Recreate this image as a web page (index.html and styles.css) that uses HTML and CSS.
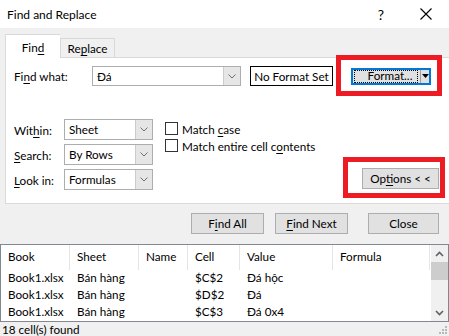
FILE: index.html
```html
<!DOCTYPE html>
<html lang="en">
<head>
    <meta charset="UTF-8">
    <link rel="stylesheet" href="styles.css">
    <title>Find and Replace</title>
</head>
<body>
    <div id="dialog">
        <div class="titlebar">
            <span class="title">Find and Replace</span>
            <span class="help">?</span>
            <svg class="close-x" width="12" height="12" viewBox="0 0 12 12">
                <path d="M0.5 0.5 L11.5 11.5 M11.5 0.5 L0.5 11.5" stroke="#000" stroke-width="1.1" fill="none"/>
            </svg>
        </div>

        <div class="tabs">
            <div class="tab active">Fin<u>d</u></div>
            <div class="tab">Re<u>p</u>lace</div>
        </div>

        <div class="panel">
            <div class="find-row">
                <label class="find-label">Fi<u>n</u>d what:</label>
                <div class="combo find-combo">
                    <span class="combo-text">Đá</span>
                    <span class="drop"><svg width="8" height="5" viewBox="0 0 8 5"><path d="M0.5 0.5 L4 4 L7.5 0.5" stroke="#707070" fill="none"/></svg></span>
                </div>
                <div class="no-format">No Format Set</div>
                <div class="sep-line"></div>
                <div class="format-btn">
                    <span class="format-main"><span class="focus-rect">Format...</span></span>
                    <span class="format-arrow"><svg width="7" height="4" viewBox="0 0 7 4"><path d="M0 0 L7 0 L3.5 4 Z" fill="#000"/></svg></span>
                </div>
            </div>

            <div class="options-row">
                <div class="opt-grid">
                    <label>Wit<u>h</u>in:</label>
                    <div class="combo">
                        <span class="combo-text">Sheet</span>
                        <span class="drop"><svg width="8" height="5" viewBox="0 0 8 5"><path d="M0.5 0.5 L4 4 L7.5 0.5" stroke="#707070" fill="none"/></svg></span>
                    </div>
                    <label><u>S</u>earch:</label>
                    <div class="combo">
                        <span class="combo-text">By Rows</span>
                        <span class="drop"><svg width="8" height="5" viewBox="0 0 8 5"><path d="M0.5 0.5 L4 4 L7.5 0.5" stroke="#707070" fill="none"/></svg></span>
                    </div>
                    <label><u>L</u>ook in:</label>
                    <div class="combo">
                        <span class="combo-text">Formulas</span>
                        <span class="drop"><svg width="8" height="5" viewBox="0 0 8 5"><path d="M0.5 0.5 L4 4 L7.5 0.5" stroke="#707070" fill="none"/></svg></span>
                    </div>
                </div>

                <div class="checks">
                    <div class="check"><span class="box"></span><span>Match <u>c</u>ase</span></div>
                    <div class="check"><span class="box"></span><span>Match entire cell c<u>o</u>ntents</span></div>
                </div>

                <div class="options-wrap">
                    <div class="btn options-btn">Op<u>t</u>ions &lt; &lt;</div>
                </div>
            </div>
        </div>

        <div class="actions">
            <div class="btn find-all">F<u>i</u>nd All</div>
            <div class="btn find-next"><u>F</u>ind Next</div>
            <div class="btn close-btn">Close</div>
        </div>

        <div class="results">
            <div class="table">
                <div class="head">
                    <span class="c-book">Book</span>
                    <span class="c-sheet">Sheet</span>
                    <span class="c-name">Name</span>
                    <span class="c-cell">Cell</span>
                    <span class="c-value">Value</span>
                    <span class="c-formula">Formula</span>
                </div>
                <div class="row">
                    <span class="c-book">Book1.xlsx</span>
                    <span class="c-sheet">Bán hàng</span>
                    <span class="c-name"></span>
                    <span class="c-cell">$C$2</span>
                    <span class="c-value">Đá hộc</span>
                    <span class="c-formula"></span>
                </div>
                <div class="row">
                    <span class="c-book">Book1.xlsx</span>
                    <span class="c-sheet">Bán hàng</span>
                    <span class="c-name"></span>
                    <span class="c-cell">$D$2</span>
                    <span class="c-value">Đá</span>
                    <span class="c-formula"></span>
                </div>
                <div class="row">
                    <span class="c-book">Book1.xlsx</span>
                    <span class="c-sheet">Bán hàng</span>
                    <span class="c-name"></span>
                    <span class="c-cell">$C$3</span>
                    <span class="c-value">Đá 0x4</span>
                    <span class="c-formula"></span>
                </div>
            </div>
            <div class="scrollbar">
                <svg class="arrow" width="9" height="6" viewBox="0 0 9 6"><path d="M1 5 L4.5 1.5 L8 5" stroke="#606060" stroke-width="1.6" fill="none"/></svg>
                <div class="thumb"></div>
                <div class="track"></div>
                <svg class="arrow" width="9" height="6" viewBox="0 0 9 6"><path d="M1 1 L4.5 4.5 L8 1" stroke="#606060" stroke-width="1.6" fill="none"/></svg>
            </div>
        </div>

        <div class="status">
            <span>18 cell(s) found</span>
            <svg class="grip" width="8" height="8" viewBox="0 0 8 8">
                <rect x="6" y="0" width="2" height="2" fill="#b8b8b8"/>
                <rect x="3" y="3" width="2" height="2" fill="#b8b8b8"/>
                <rect x="6" y="3" width="2" height="2" fill="#b8b8b8"/>
                <rect x="0" y="6" width="2" height="2" fill="#b8b8b8"/>
                <rect x="3" y="6" width="2" height="2" fill="#b8b8b8"/>
                <rect x="6" y="6" width="2" height="2" fill="#b8b8b8"/>
            </svg>
        </div>

        <!-- red highlight marks drawn over the dialog -->
        <div class="mark mark-format"></div>
        <div class="mark mark-options"></div>
    </div>
</body>
</html>
```

FILE: styles.css
```css
/* Whole window */
body {
    margin: 0;
    font-family: Lato, "Noto Sans", sans-serif;
    font-size: 11.7px;
    color: #000;
}

#dialog {
    position: relative;
    width: 449px;
    height: 336px;
    background: #f0f0f0;
    overflow: hidden;
    display: flex;
    flex-direction: column;
}

u {
    text-decoration-thickness: 1px;
    text-underline-offset: 2px;
}

/* Title bar */
.titlebar {
    height: 28px;
    background: #fff;
    display: flex;
    align-items: center;
    padding-left: 7px;
    flex-shrink: 0;
}

.title {
    flex: 1;
    font-size: 12px;
}

.help {
    font-size: 14px;
    margin-right: 36px;
}

.close-x {
    margin-right: 17px;
}

/* Tabs */
.tabs {
    display: flex;
    align-items: flex-end;
    margin-top: 7px;
    margin-left: 5px;
    height: 22px;
    position: relative;
    z-index: 1;
}

.tab {
    height: 18px;
    width: 53px;
    border: 1px solid #d9d9d9;
    border-bottom: none;
    text-align: center;
    line-height: 19px;
    background: #f0f0f0;
}

.tab.active {
    height: 23px;
    width: 54px;
    background: #fff;
    border-right: none;
    line-height: 25px;
    margin-bottom: -1px;
}

/* Tab page */
.panel {
    margin-left: 5px;
    width: 437px;
    height: 141px;
    background: #fff;
    border: 1px solid #d9d9d9;
    padding: 8px 0 0 8px;
    box-sizing: content-box;
}

.find-row {
    display: flex;
    align-items: center;
    height: 20px;
}

.find-label {
    width: 78px;
}

.combo {
    display: flex;
    align-items: stretch;
    border: 1px solid #adadad;
    background: #fff;
    box-sizing: border-box;
}

.combo-text {
    flex: 1;
    padding-left: 4px;
    line-height: 18px;
}

.drop {
    width: 16px;
    background: #e6e6e6;
    border-left: 1px solid #cccccc;
    display: flex;
    align-items: center;
    justify-content: center;
}

.find-combo {
    width: 149px;
    height: 20px;
}

.no-format {
    margin-left: 9px;
    width: 83px;
    height: 20px;
    border: 1px solid #000;
    box-sizing: border-box;
    text-align: center;
    line-height: 18px;
    white-space: nowrap;
}

.sep-line {
    margin-left: 6px;
    width: 1px;
    height: 19px;
    background: #000;
}

.format-btn {
    margin-left: 11px;
    width: 80px;
    height: 17px;
    border: 2px solid #0078d7;
    box-sizing: border-box;
    background: #e1e1e1;
    display: flex;
}

.format-main {
    flex: 1;
    display: flex;
    padding: 0 2px 0 1px;
}

.focus-rect {
    flex: 1;
    border: 1px dotted #000;
    display: flex;
    align-items: center;
    justify-content: center;
    padding-left: 8px;
    line-height: 1;
    white-space: nowrap;
}

.format-arrow {
    width: 8px;
    border-left: 1px solid #a0a0a0;
    display: flex;
    align-items: center;
    justify-content: center;
}

/* Options */
.options-row {
    display: flex;
    margin-top: 33px;
}

.opt-grid {
    display: grid;
    grid-template-columns: 50px 89px;
    grid-auto-rows: 21px;
    row-gap: 4px;
    align-items: center;
}

.opt-grid .combo {
    height: 21px;
}

.checks {
    margin-left: 12px;
    margin-top: 3px;
    display: flex;
    flex-direction: column;
    gap: 4px;
}

.check {
    display: flex;
    align-items: center;
    height: 13px;
    white-space: pre;
}

.box {
    width: 13px;
    height: 13px;
    border: 1px solid #333;
    box-sizing: border-box;
    margin-right: 4px;
    background: #fff;
}

.options-wrap {
    flex: 1;
    display: flex;
    justify-content: flex-end;
    align-items: flex-end;
    padding-right: 12px;
    padding-bottom: 1px;
}

/* Buttons */
.btn {
    height: 21px;
    border: 1px solid #adadad;
    box-sizing: border-box;
    background: #e1e1e1;
    text-align: center;
    line-height: 19px;
}

.options-btn {
    width: 77px;
}

.actions {
    display: flex;
    justify-content: flex-end;
    margin-top: 9px;
    padding-right: 10px;
}

.find-all {
    width: 73px;
}

.find-next {
    width: 73px;
    margin-left: 11px;
}

.close-btn {
    width: 71px;
    margin-left: 20px;
}

/* Results list */
.results {
    margin-top: 10px;
    width: 447px;
    height: 77px;
    border: 1px solid #828790;
    background: #fff;
    display: flex;
}

.table {
    flex: 1;
}

.head, .row {
    display: flex;
}

.head {
    height: 25px;
    align-items: center;
}

.head span {
    border-right: 1px solid #e5e5e5;
    height: 25px;
    line-height: 22px;
}

.row {
    height: 17px;
    line-height: 15px;
}

.head span, .row span {
    box-sizing: border-box;
    padding-left: 7px;
    white-space: nowrap;
}

.c-book { width: 69px; }
.c-sheet { width: 69px; }
.c-name { width: 49px; }
.c-cell { width: 52px; }
.c-value { width: 93px; }
.c-formula { width: 97px; }

.scrollbar {
    width: 17px;
    background: #f0f0f0;
    display: flex;
    flex-direction: column;
    align-items: center;
}

.arrow {
    margin: 6px 0 5px;
}

.thumb {
    width: 17px;
    height: 18px;
    background: #cdcdcd;
}

.track {
    flex: 1;
}

/* Status line */
.status {
    flex: 1;
    display: flex;
    align-items: center;
    justify-content: space-between;
    padding-left: 2px;
    padding-right: 2px;
}

.grip {
    align-self: flex-end;
    margin-bottom: 2px;
}

/* Red annotation boxes */
.mark {
    position: absolute;
    border: 5px solid #ed1c24;
    box-sizing: border-box;
}

.mark-format {
    left: 336px;
    top: 55px;
    width: 106px;
    height: 41px;
}

.mark-options {
    left: 343px;
    top: 157px;
    width: 102px;
    height: 41px;
}
```
